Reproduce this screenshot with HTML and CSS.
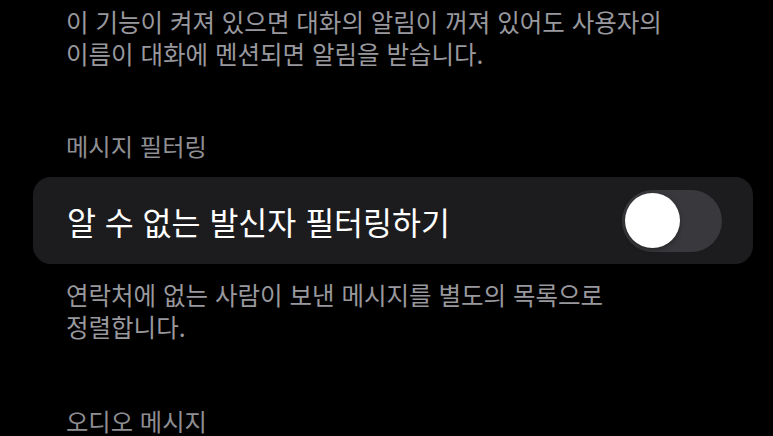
FILE: index.html
```html
<!DOCTYPE html>
<html lang="ko">
<head>
<meta charset="utf-8">
<title>메시지 설정</title>
<link rel="stylesheet" href="styles.css">
</head>
<body>
<main class="page">
  <p class="footer-text first">이 기능이 켜져 있으면 대화의 알림이 꺼져 있어도 사용자의<br>이름이 대화에 멘션되면 알림을 받습니다.</p>
  <h2 class="section-header">메시지 필터링</h2>
  <div class="card">
    <span class="row-title">알 수 없는 발신자 필터링하기</span>
    <span class="toggle"><span class="knob"></span></span>
  </div>
  <p class="footer-text second">연락처에 없는 사람이 보낸 메시지를 별도의 목록으로<br>정렬합니다.</p>
  <h2 class="section-header last">오디오 메시지</h2>
</main>
</body>
</html>
```
FILE: styles.css
```css
html, body {
  margin: 0;
  padding: 0;
  background: #000;
}
body {
  width: 773px;
  height: 436px;
  overflow: hidden;
  font-family: "Noto Sans CJK KR", "Noto Sans", sans-serif;
}
.page {
  display: flex;
  flex-direction: column;
}
.footer-text {
  margin: 0;
  padding-left: 66px;
  color: #98989e;
  font-size: 24.5px;
  line-height: 32px;
}
.footer-text.first {
  margin-top: 6px;
}
.footer-text.second {
  margin-top: 15px;
}
.section-header {
  margin: 61px 0 0;
  padding-left: 66px;
  color: #8e8e93;
  font-size: 24.3px;
  font-weight: 400;
  line-height: 30px;
}
.section-header.last {
  margin-top: 63px;
}
.card {
  margin: 16px 0 0 33px;
  width: 720px;
  height: 87px;
  box-sizing: border-box;
  background: #1c1c1e;
  border-radius: 18px;
  display: flex;
  align-items: center;
  justify-content: space-between;
  padding: 0 31px 0 34px;
}
.row-title {
  color: #fff;
  font-size: 31.5px;
  line-height: 40px;
}
.toggle {
  width: 100px;
  height: 62px;
  border-radius: 31px;
  background: #39393d;
  display: flex;
  align-items: center;
  padding-left: 3px;
  box-sizing: border-box;
}
.knob {
  width: 55px;
  height: 55px;
  border-radius: 50%;
  background: #fff;
  box-shadow: 0 2px 5px rgba(0, 0, 0, 0.35);
}
```
